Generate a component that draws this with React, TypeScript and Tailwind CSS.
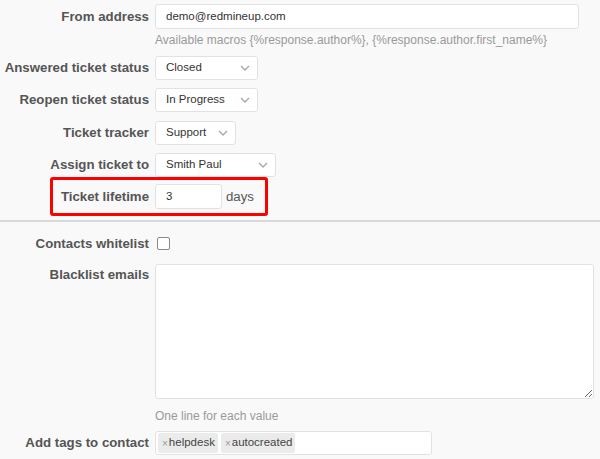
import React from "react";

const labelCls =
  "shrink-0 text-right font-bold text-[13.25px] leading-[16px] text-[#555]";

function Chevron() {
  return (
    <svg width="10" height="6" viewBox="0 0 10 6" className="shrink-0">
      <polyline
        points="1,1 5,5 9,1"
        fill="none"
        stroke="#a8a8a8"
        strokeWidth="1.4"
      />
    </svg>
  );
}

function Select({ value, width }: { value: string; width: string }) {
  return (
    <div
      className={`${width} h-[24px] ml-[6px] flex items-center justify-between pl-[10px] pr-[7px] bg-white border border-[#e2e2e2] rounded-[3px] text-[11.5px] text-[#333]`}
    >
      <span>{value}</span>
      <Chevron />
    </div>
  );
}

function Row({
  label,
  className,
  children,
}: {
  label: string;
  className?: string;
  children: React.ReactNode;
}) {
  return (
    <div className={`flex items-center ${className ?? ""}`}>
      <div className={`${labelCls} w-[149px]`}>{label}</div>
      {children}
    </div>
  );
}

function Tag({ name }: { name: string }) {
  return (
    <span className="flex items-center h-[20px] pl-[4px] pr-[3px] bg-[#ebebeb] rounded-[2px] text-[11.5px] text-[#444]">
      <span className="text-[#999] text-[10px] mr-[1px]">×</span>
      {name}
    </span>
  );
}

export default function App() {
  return (
    <div
      className="w-[600px] h-[459px] overflow-hidden bg-[#f9f9f9] pt-[4px]"
      style={{ fontFamily: '"Liberation Sans", Arial, sans-serif' }}
    >
      <Row label="From address">
        <div className="ml-[6px] w-[424px] h-[25px] flex items-center pl-[10px] bg-white border border-[#e2e2e2] rounded-[3px] text-[11.5px] text-[#333]">
          demo@redmineup.com
        </div>
      </Row>
      <div className="ml-[155px] mt-[3px] text-[12px] leading-[16px] text-[#999] whitespace-nowrap">
        Available macros {"{%response.author%}"}, {"{%response.author.first_name%}"}
      </div>

      <Row label="Answered ticket status" className="mt-[8px]">
        <Select value="Closed" width="w-[103px]" />
      </Row>
      <Row label="Reopen ticket status" className="mt-[8px]">
        <Select value="In Progress" width="w-[103px]" />
      </Row>
      <Row label="Ticket tracker" className="mt-[9px]">
        <Select value="Support" width="w-[81px]" />
      </Row>
      <Row label="Assign ticket to" className="mt-[8px]">
        <Select value="Smith Paul" width="w-[121px]" />
      </Row>

      <div className="ml-[50px] w-[218px] h-[39px] border-[3px] border-[#ff0000] rounded-[3px] flex items-center">
        <div className={`${labelCls} w-[96px]`}>Ticket lifetime</div>
        <div className="ml-[6px] w-[67px] h-[25px] flex items-center pl-[10px] bg-white border border-[#e2e2e2] rounded-[3px] text-[11.5px] text-[#333]">
          3
        </div>
        <span className="ml-[4px] text-[13.25px] text-[#555]">days</span>
      </div>

      <div className="mt-[4px] border-t-2 border-[#dadada]" />

      <Row label="Contacts whitelist" className="mt-[15px] h-[13px]">
        <span className="ml-[8px] w-[13px] h-[13px] border border-[#8a8a8a] rounded-[2px] bg-white" />
      </Row>

      <div className="flex items-start mt-[14px]">
        <div className={`${labelCls} w-[149px] pt-[3px]`}>Blacklist emails</div>
        <textarea
          className="ml-[6px] w-[439px] h-[135px] bg-white border border-[#e2e2e2] rounded-[3px] outline-none"
          defaultValue=""
        />
      </div>
      <div className="ml-[155px] mt-[9px] text-[12px] leading-[16px] text-[#999]">
        One line for each value
      </div>

      <Row label="Add tags to contact" className="mt-[7px]">
        <div className="ml-[6px] w-[277px] h-[24px] flex items-center gap-[3px] px-[2px] bg-white border border-[#e2e2e2] rounded-[3px]">
          <Tag name="helpdesk" />
          <Tag name="autocreated" />
        </div>
      </Row>
    </div>
  );
}
